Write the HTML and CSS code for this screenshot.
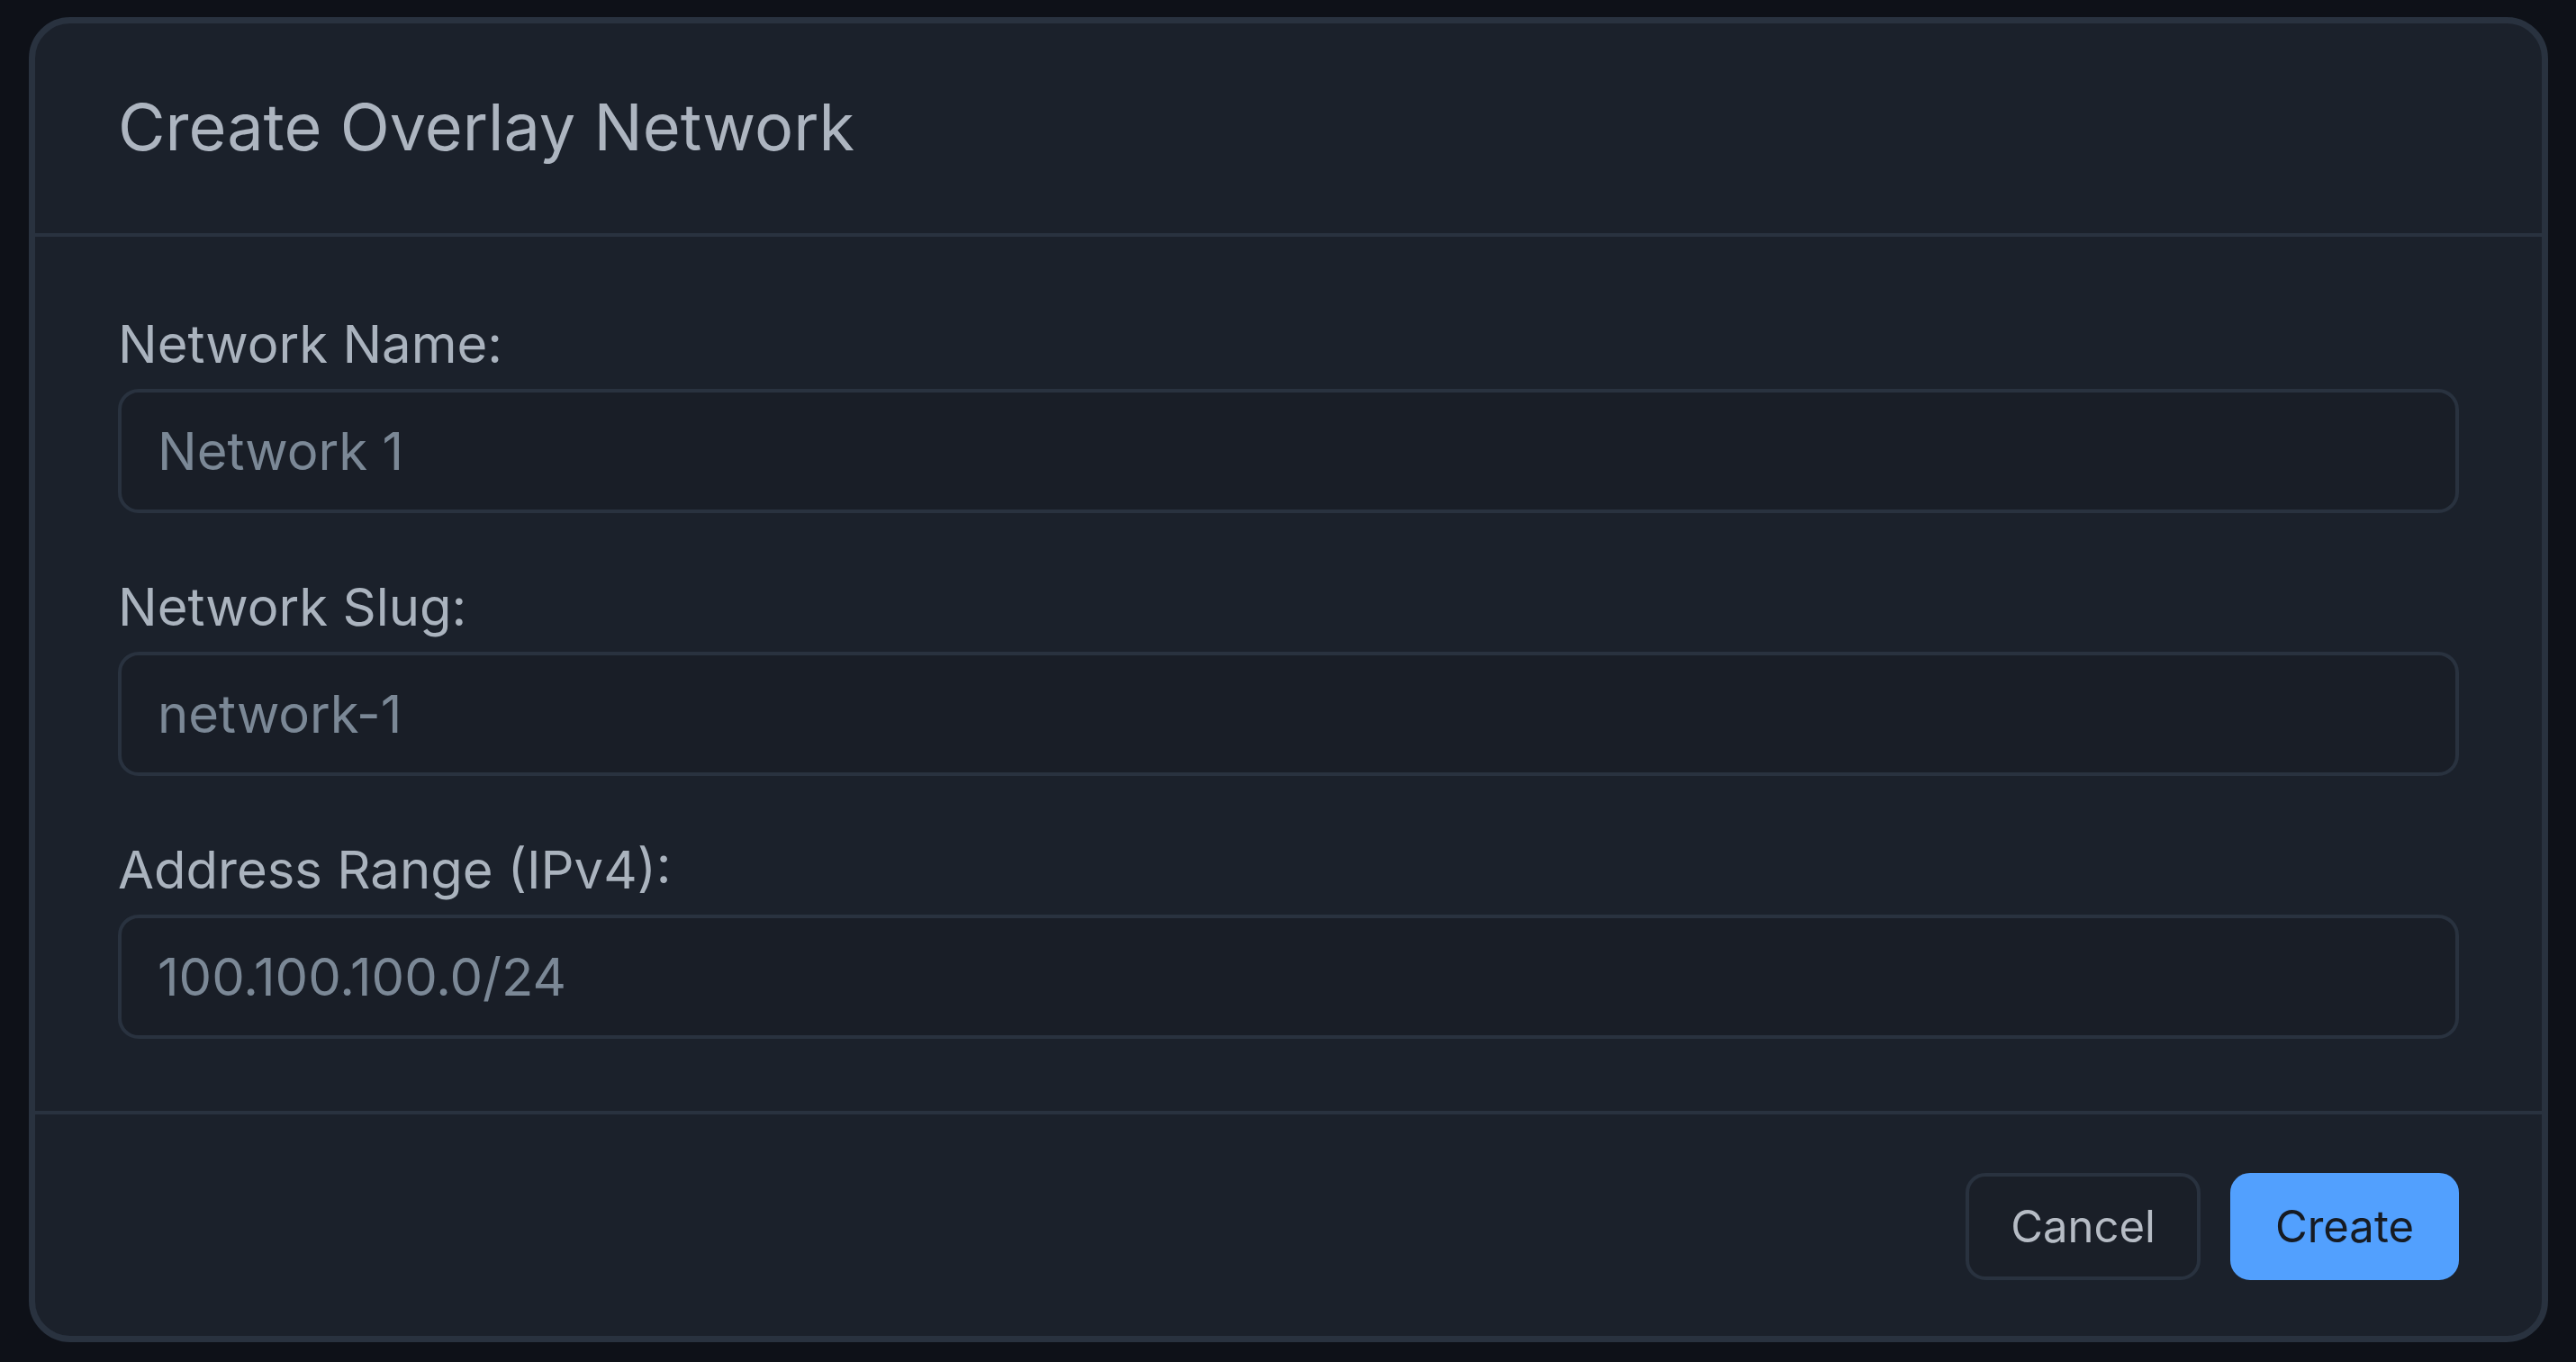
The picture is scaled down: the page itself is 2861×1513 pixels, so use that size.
FILE: index.html
```html
<!DOCTYPE html>
<html lang="en">
<head>
<meta charset="utf-8">
<title>Create Overlay Network</title>
<link rel="stylesheet" href="styles.css">
</head>
<body>
  <div class="dialog">
    <div class="dialog-header">
      <h1 class="dialog-title">Create Overlay Network</h1>
    </div>
    <form class="dialog-body">
      <div class="field">
        <label class="field-label" for="name">Network Name:</label>
        <input class="field-input" id="name" type="text" placeholder="Network 1">
      </div>
      <div class="field">
        <label class="field-label" for="slug">Network Slug:</label>
        <input class="field-input" id="slug" type="text" placeholder="network-1">
      </div>
      <div class="field">
        <label class="field-label" for="range">Address Range (IPv4):</label>
        <input class="field-input" id="range" type="text" placeholder="100.100.100.0/24">
      </div>
    </form>
    <div class="dialog-footer">
      <button class="btn btn-secondary" type="button">Cancel</button>
      <button class="btn btn-primary" type="button">Create</button>
    </div>
  </div>
</body>
</html>
```

FILE: styles.css
```css
* {
  box-sizing: border-box;
}

html, body {
  height: 100%;
}

body {
  margin: 0;
  padding: 19px 31px 22px 32px;
  background: #0e1118;
  font-family: Inter, "Noto Sans", sans-serif;
  color: #aab3be;
}

.dialog {
  background: #1b212b;
  border: 7px solid #29323f;
  border-radius: 46px;
  overflow: hidden;
}

.dialog-header {
  padding: 71px 92px 74px 92px;
  border-bottom: 4px solid #29323f;
}

.dialog-title {
  margin: 0;
  font-size: 72px;
  line-height: 88px;
  font-weight: 400;
  color: #adb5c0;
}

.dialog-body {
  padding: 76px 92px 80px 92px;
  margin: 0;
}

.field {
  display: flex;
  flex-direction: column;
}

.field + .field {
  margin-top: 61px;
}

.field-label {
  font-size: 58px;
  line-height: 87px;
  color: #aab3be;
  margin-bottom: 6px;
}

.field-input {
  height: 138px;
  width: 100%;
  border: 4px solid #29323f;
  border-radius: 23px;
  background: #191e27;
  padding: 0 40px;
  font-family: Inter, "Noto Sans", sans-serif;
  font-size: 58px;
  color: #7b8896;
  outline: none;
}

.field-input::placeholder {
  color: #7b8896;
  opacity: 1;
}

.dialog-footer {
  display: flex;
  justify-content: flex-end;
  gap: 33px;
  padding: 65px 92px 62px 92px;
  border-top: 4px solid #29323f;
}

.btn {
  height: 119px;
  padding: 0 46px;
  border-radius: 22px;
  border: 4px solid transparent;
  font-family: Inter, "Noto Sans", sans-serif;
  font-size: 49px;
  line-height: 1;
  display: flex;
  align-items: center;
  justify-content: center;
  cursor: pointer;
}

.btn-secondary {
  background: #1a1f28;
  border-color: #29323f;
  color: #b6bcc5;
}

.btn-primary {
  background: #52a0fe;
  border-color: #52a0fe;
  color: #161b23;
}
```
